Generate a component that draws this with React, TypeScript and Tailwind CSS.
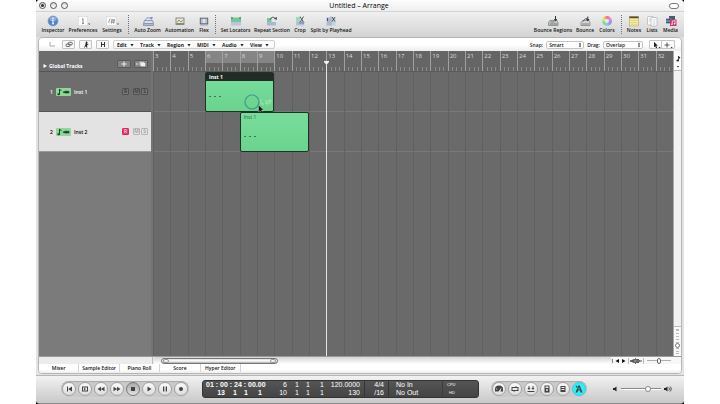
import React from 'react';
import clsx from 'clsx';

// Bars shown on the ruler, one grid column each
const bars = Array.from({ length: 30 }, (_, i) => i + 3);

interface IRegion {
  name: string;
  place: string;
  selected: boolean;
}

interface ITrack {
  id: number;
  name: string;
  armed: boolean;
  regions: IRegion[];
}

const tracks: ITrack[] = [
  { id: 1, name: 'Inst 1', armed: false, regions: [{ name: 'Inst 1', place: 'col-start-4 col-span-4', selected: true }] },
  { id: 2, name: 'Inst 2', armed: true, regions: [{ name: 'Inst 1', place: 'col-start-6 col-span-4', selected: false }] },
];

const toolIcons: Record<string, React.ReactNode> = {
  Inspector: (
    <>
      <circle cx="7" cy="6" r="5" fill="#4f86c9" stroke="#7e9fca" strokeWidth=".7" />
      <ellipse cx="7" cy="3.7" rx="3.6" ry="2.3" fill="#a9cbef" opacity=".6" />
      <path d="M7 5.3v3.4M6.1 5.4H7M6 8.8h2" stroke="#fff" strokeWidth="1.1" />
      <circle cx="7" cy="3.4" r=".8" fill="#fff" />
    </>
  ),
  Preferences: (
    <>
      <rect x="2.5" y="1.5" width="9" height="9" fill="#fbfbfb" stroke="#cfcfcf" strokeWidth=".5" />
      <path d="M7 3.5v5M6 4.2h1M6 8.4h2" stroke="#888" />
      <path d="M12.2 8.6h2l-1 1.4z" fill="#444" />
    </>
  ),
  Settings: (
    <>
      <rect x="1.5" y="1.5" width="9.5" height="9" fill="#fbfbfb" stroke="#cfcfcf" strokeWidth=".5" />
      <path d="M3.5 8l1.6-4.5M6 5.2h4M5.7 7.2h4M7.2 4L6.5 8.5M9.2 4l-.7 4.5" stroke="#777" strokeWidth=".7" />
      <path d="M12 8.6h2l-1 1.4z" fill="#444" />
    </>
  ),
  'Auto Zoom': (
    <>
      <path d="M2.5 8.5l1-3h8l1 3v2h-10z" fill="#d8dde8" stroke="#7d8699" strokeWidth=".8" />
      <path d="M4 5.5c1-3 4-3.5 6-1.5" stroke="#7c91c9" fill="none" />
      <path d="M9 2l3 .3-1.4 2.5z" fill="#6c84c4" />
      <path d="M3 8.8h9" stroke="#8799c0" strokeWidth="1.4" />
    </>
  ),
  Automation: (
    <>
      <rect x="3" y="3" width="8" height="6.5" fill="#e7e6d8" stroke="#77776f" strokeWidth=".8" />
      <path d="M4 7.5l2-2.5 2 2 2.5-2" stroke="#8a7d3e" strokeWidth=".8" fill="none" />
      <path d="M3.4 8.7h7.4" stroke="#667b62" />
    </>
  ),
  Flex: (
    <>
      <rect x="3.3" y="3.2" width="7.4" height="5.6" fill="#dfe3ee" stroke="#5d6069" strokeWidth="1" />
      <path d="M3 10h8M5 4v4M9 4v4" stroke="#828999" strokeWidth=".7" />
    </>
  ),
  'Set Locators': (
    <>
      <rect x="2" y="2.5" width="10" height="4.5" fill="#75c79a" />
      <rect x="2" y="7" width="10" height="3.5" fill="#b9c6dc" />
      <path d="M2.5 1.5v3l1.5-1.5zM11.5 1.5v3L10 3z" fill="#3d7458" />
    </>
  ),
  'Repeat Section': (
    <>
      <rect x="2" y="3" width="4.5" height="4" fill="#75c79a" />
      <rect x="2" y="7" width="9" height="3.5" fill="#aab8d2" />
      <path d="M5.5 4.5C6 1.8 9 1.5 10.5 4" stroke="#3c4858" fill="none" />
      <path d="M9 4l3 .8-.4-3z" fill="#3c4858" />
    </>
  ),
  Crop: (
    <>
      <rect x="3" y="2" width="4" height="4.5" fill="#9edab8" />
      <rect x="3" y="6.5" width="8" height="4" fill="#b3bfdd" />
      <path d="M7 1.5l3 5M10.5 1.5l-3 5" stroke="#3d4a55" strokeWidth=".9" />
      <circle cx="7.3" cy="7.5" r="1" fill="none" stroke="#4f6b87" strokeWidth=".6" />
      <circle cx="10" cy="7.5" r="1" fill="none" stroke="#4f6b87" strokeWidth=".6" />
    </>
  ),
  'Split by Playhead': (
    <>
      <rect x="2.5" y="2.5" width="4" height="8" fill="#aeb8d6" />
      <rect x="7.5" y="2.5" width="4" height="8" fill="#bfd0df" />
      <path d="M7 1v10" stroke="#888" strokeWidth=".6" />
      <path d="M8 2l3 4.5M11 2L8 6.5M3.5 3v3" stroke="#3d4a55" strokeWidth=".9" />
    </>
  ),
  'Bounce Regions': (
    <>
      <path d="M2.5 10.5v-3l1.5-2h7l1 2v3z" fill="#c9ccca" stroke="#777" strokeWidth=".7" />
      <path d="M3.5 9h8M4.5 7h4" stroke="#73827b" />
      <path d="M9.5 1v4" stroke="#333" />
      <path d="M7.8 4h3.4L9.5 6.5z" fill="#333" />
    </>
  ),
  Bounce: (
    <>
      <path d="M3 10.5v-3l1.5-2h6.5l1 2v3z" fill="#d3d5d6" stroke="#777" strokeWidth=".7" />
      <path d="M4 9h7" stroke="#7c8288" />
      <path d="M5 6.5c1-2 2-2.8 4-3" stroke="#555" fill="none" />
      <path d="M9.8 1.5v4" stroke="#333" />
      <path d="M8 4h3.6L9.8 6.3z" fill="#333" />
    </>
  ),
  Notes: (
    <>
      <rect x="2.5" y="1.5" width="9" height="9.5" fill="#f6ee9d" stroke="#9c9768" strokeWidth=".5" />
      <path d="M2.5 1.5h9v1.8h-9z" fill="#54492f" />
      <path d="M3.5 5.5h7M3.5 7.5h7M3.5 9.3h7" stroke="#d4c66c" strokeWidth=".6" />
    </>
  ),
  Lists: (
    <>
      <rect x="2.5" y="1.5" width="6" height="8.5" rx="1" fill="#fafafa" stroke="#aaa" strokeWidth=".6" />
      <rect x="6" y="2.5" width="6" height="8.5" rx="1" fill="#fff" stroke="#a5a5a5" strokeWidth=".6" />
      <path d="M7.5 5h3M7.5 7h3M7.5 9h3M4 4h1.5M4 6h1.5" stroke="#a9b5ae" strokeWidth=".6" />
    </>
  ),
  Media: (
    <>
      <rect x="5" y="1" width="6" height="5" fill="#4c5c70" />
      <rect x="2" y="3.5" width="6" height="5" fill="#6a86aa" />
      <path d="M2 4.5h5M2 7.5h5" stroke="#35475e" strokeWidth=".7" />
      <rect x="6" y="4.5" width="6.5" height="6.5" fill="#c6396c" />
      <path d="M8.3 9V6l2.7-.5v3" stroke="#fff" strokeWidth=".7" fill="none" />
      <circle cx="7.9" cy="9.2" r=".8" fill="#fff" />
      <circle cx="10.6" cy="8.7" r=".8" fill="#fff" />
    </>
  ),
};

interface ITool {
  label: string;
  width: string;
}

const leftTools: ITool[][] = [
  [
    { label: 'Inspector', width: 'w-7' },
    { label: 'Preferences', width: 'w-8' },
    { label: 'Settings', width: 'w-[26px]' },
  ],
  [
    { label: 'Auto Zoom', width: 'w-[31px]' },
    { label: 'Automation', width: 'w-[33px]' },
    { label: 'Flex', width: 'w-4' },
  ],
  [
    { label: 'Set Locators', width: 'w-[33px]' },
    { label: 'Repeat Section', width: 'w-10' },
    { label: 'Crop', width: 'w-4' },
    { label: 'Split by Playhead', width: 'w-[46px]' },
  ],
];

const rightTools: ITool[][] = [
  [
    { label: 'Bounce Regions', width: 'w-[42px]' },
    { label: 'Bounce', width: 'w-[22px]' },
    { label: 'Colors', width: 'w-[22px]' },
  ],
  [
    { label: 'Notes', width: 'w-[18px]' },
    { label: 'Lists', width: 'w-[18px]' },
    { label: 'Media', width: 'w-[19px]' },
  ],
];

const ToolGroups = ({ groups }: { groups: ITool[][] }) => (
  <div className="flex">
    {groups.map((group, index) => (
      <div key={group[0].label} className="flex">
        {index > 0 && (
          <div className="flex w-[7px] justify-center">
            <div className="border-l border-dotted border-gray-500" />
          </div>
        )}
        {group.map((tool) => (
          <button key={tool.label} className={clsx('flex flex-col items-center whitespace-nowrap', tool.width)}>
            {tool.label === 'Colors' ? (
              <span className="m-px flex size-[10px] items-center justify-center rounded-full bg-[conic-gradient(#ee7777,#e58be5,#8f8ff0,#79d4e6,#7ddc8a,#eee873,#ee7777)]">
                <span className="size-1 rounded-full bg-white/70" />
              </span>
            ) : (
              <svg viewBox="0 0 14 12" fill="none" className="h-3 w-[14px] shrink-0">{toolIcons[tool.label]}</svg>
            )}
            <span className="leading-[7px]">{tool.label}</span>
          </button>
        ))}
      </div>
    ))}
  </div>
);

const TitleBar = () => (
  <div className="flex h-[11px] items-center bg-gradient-to-b from-[#fdfdfd] to-[#efefef] pr-[5px] pl-[3px]">
    <div className="flex flex-1 gap-1">
      {['Close', 'Minimize', 'Zoom'].map((name) => (
        <button
          key={name}
          aria-label={name}
          className="flex size-[7px] items-center justify-center rounded-full border border-[#555] bg-gradient-to-b from-gray-300 to-white"
        >
          {name === 'Close' && <span className="size-[3px] rounded-full bg-[#333]" />}
        </button>
      ))}
    </div>
    <h1 className="text-[7px] leading-[10px] font-medium text-black">Untitled – Arrange</h1>
    <div className="flex flex-1 justify-end">
      <button aria-label="Toggle toolbar" className="h-[6px] w-[10px] rounded-full border border-[#777] bg-white" />
    </div>
  </div>
);

const menus = [
  { label: 'Edit', width: 'w-[23px]' },
  { label: 'Track', width: 'w-[27px]' },
  { label: 'Region', width: 'w-[30px]' },
  { label: 'MIDI', width: 'w-[25px]' },
  { label: 'Audio', width: 'w-7' },
  { label: 'View', width: 'w-[25px]' },
];

const Dropdown = ({ label, value, width }: { label: string; value: string; width: string }) => (
  <label className="flex items-center gap-[3px]">
    {label}
    <span className={clsx('relative flex', width)}>
      <select
        defaultValue={value}
        className="h-2 w-full appearance-none rounded-[2px] border border-[#c4c4c4] bg-white pl-[2px] leading-[6px]"
      >
        <option>{value}</option>
      </select>
      <svg viewBox="0 0 4 7" className="pointer-events-none absolute right-[2px] h-2 w-1">
        <path d="M2 1l1.2 2H.8zM2 6L.8 4h2.4z" fill="#333" />
      </svg>
    </span>
  </label>
);

const MenuBar = () => (
  <div className="flex h-3 items-center justify-between rounded-t-[3px] bg-gradient-to-b from-white from-50% to-[#ececec] pr-[6px] pb-px pl-[7px] font-bold text-[#222]">
    <div className="flex items-center gap-1">
      <button aria-label="Up" className="flex w-3 justify-center">
        <svg viewBox="0 0 8 7" className="h-[7px] w-2" fill="none" stroke="#aaa"><path d="M2 1v4h5" /></svg>
      </button>
      <button aria-label="Link" className="flex w-[13px] justify-center rounded-[1px] border border-[#c4c4c4] bg-[#f7f7f7]">
        <svg viewBox="0 0 8 7" className="h-[7px] w-2" fill="none" stroke="#444" strokeWidth=".8">
          <rect x="1" y="3" width="4" height="2.5" rx="1" />
          <rect x="3.3" y="1.3" width="4" height="2.5" rx="1" />
        </svg>
      </button>
      <button aria-label="Catch" className="flex w-[13px] justify-center rounded-[1px] border border-[#c4c4c4] bg-[#f7f7f7]">
        <svg viewBox="0 0 8 7" className="h-[7px] w-2" fill="#222">
          <circle cx="4.6" cy="1.3" r=".9" />
          <path d="M3.7 2h1.6v1.3h1v.8H5l.4 2.5h-1l-.6-1.6-1 1.6H2l1.3-2.7z" />
        </svg>
      </button>
      <button aria-label="Snap to grid" className="flex w-[13px] justify-center rounded-[1px] border border-[#c4c4c4] bg-[#f7f7f7]">
        <svg viewBox="0 0 8 7" className="h-[7px] w-2" fill="none" stroke="#333"><path d="M2.5 1v5M5.5 1v5M2.5 3.5h3" /></svg>
      </button>
      <div className="flex h-[9px] items-center rounded-[2px] border border-[#cfcfcf] pl-[2px]">
        {menus.map((menu) => (
          <button key={menu.label} className={clsx('flex items-center justify-between pr-[5px] pl-px', menu.width)}>
            {menu.label}
            <svg viewBox="0 0 4 4" className="size-1"><path d="M.4 1h3.2L2 3.6z" fill="#222" /></svg>
          </button>
        ))}
      </div>
    </div>
    <div className="flex items-center gap-[3px] font-semibold">
      <Dropdown label="Snap:" value="Smart" width="w-[38px]" />
      <Dropdown label="Drag:" value="Overlap" width="w-10" />
      <div className="ml-[3px] flex h-[9px] items-center rounded-[1px] border border-[#c4c4c4]">
        <button aria-label="Pointer tool" className="flex w-3 justify-center border-r border-[#c4c4c4]">
          <svg viewBox="0 0 10 8" className="h-2 w-[10px]" fill="#222">
            <path d="M3 .8v5.4l1.3-1 .8 2 1-.4-.9-2h1.6z" />
            <path d="M7.6 6h2l-1 1.3z" />
          </svg>
        </button>
        <button aria-label="Pencil tool" className="flex w-3 justify-center">
          <svg viewBox="0 0 10 8" className="h-2 w-[10px]" fill="#222">
            <path d="M4 1.5v5M1.5 4h5" stroke="#333" strokeWidth=".8" />
            <path d="M7.6 6h2l-1 1.3z" />
          </svg>
        </button>
      </div>
    </div>
  </div>
);

const TrackHeader = ({ track }: { track: ITrack }) => (
  <div
    className={clsx(
      'flex h-10 items-center border-b pr-[3px] pl-[11px] font-semibold',
      track.armed ? 'border-[#999] bg-[#e3e3e3] text-black' : 'border-[#555] bg-[#6d6d6d] text-white',
    )}
  >
    <span className="w-[6px]">{track.id}</span>
    <svg viewBox="0 0 15 8" className="h-2 w-[15px]">
      <rect width="15" height="8" rx="1" fill="#8ed79a" />
      <path d="M3.5 1v5M3.5 1l2 2" stroke="#24402a" fill="none" />
      <ellipse cx="2.7" cy="6.2" rx="1.4" ry="1" fill="#24402a" />
      <path d="M6 4h1l1-1 1 .5 1-1.2 1 1.2 1-1 1 1 1 .5-1 .7-1 1-1-1-1 1.2-1-1.2-1 .5-1-1z" fill="#24402a" />
    </svg>
    <span className="ml-[3px] flex-1">{track.name}</span>
    <div className="flex gap-px font-normal">
      {['R', 'M', 'S'].map((letter) => (
        <button
          key={letter}
          className={clsx(
            'flex size-[7px] items-center justify-center rounded-[1px] border leading-[5px]',
            letter === 'R' && 'mr-[3px]',
            letter === 'R' && track.armed && 'border-[#d92a60] bg-[#f0336d] text-white',
            !(letter === 'R' && track.armed) && (track.armed ? 'border-[#b5b5b5] text-[#888]' : 'border-[#505050] bg-[#777] text-[#222]'),
          )}
        >
          {letter}
        </button>
      ))}
    </div>
  </div>
);

const Region = ({ region }: { region: IRegion }) => (
  <div className={clsx('relative row-start-1 flex flex-col rounded-[2px] border border-[#1d3326] bg-gradient-to-b from-[#78dd9c] to-[#69d48e]', region.place)}>
    <div className={clsx('px-[3px] leading-[8px]', region.selected ? 'bg-[#232b27] font-bold text-white' : 'font-medium text-[#27613e]')}>
      {region.name}
    </div>
    <div className="flex flex-1 items-center gap-[3px] px-[3px]">
      <span className="h-px w-[2px] bg-[#3a7a53]" />
      <span className="h-px w-[2px] bg-[#3a7a53]" />
      <span className="h-px w-[2px] bg-[#3a7a53]" />
    </div>
    {/* Loop handle, click ring and the pointer */}
    {region.selected && (
      <svg viewBox="0 0 30 20" className="absolute top-5 right-0 h-5 w-[30px]" fill="none">
        <path d="M18 6v5h3M23 7v4h2V7M27 6v5M26 8h3" stroke="#b8eac8" strokeWidth=".7" />
        <circle cx="9" cy="9" r="7" stroke="#3a9a88" strokeWidth="1.2" />
        <path d="M15.5 12v7l1.6-1.4 1 2.2 1.3-.6-1-2.1h2.2z" fill="#000" stroke="#ddd" strokeWidth=".4" />
      </svg>
    )}
  </div>
);

const Ruler = () => (
  <div className="grid h-[21px] grid-cols-[repeat(30,minmax(0,1fr))] border-b border-[#5c5c5c] bg-[#656565]">
    {bars.map((bar) => (
      <div key={bar} className="flex flex-col justify-between border-l border-[#a0a0a0]">
        <div className={clsx('h-3 pl-px text-[6px] leading-[10px] text-[#dadada]', bar >= 6 && bar < 10 && 'bg-[#858585]')}>{bar}</div>
        <div className="flex h-1 justify-evenly">
          <span className="w-px bg-[#8c8c8c]" />
          <span className="w-px bg-[#8c8c8c]" />
          <span className="w-px bg-[#8c8c8c]" />
        </div>
      </div>
    ))}
  </div>
);

const Timeline = () => (
  <div className="relative flex min-w-0 flex-1 flex-col bg-[#6a6a6a]">
    <Ruler />
    <div className="relative flex-1">
      <div className="absolute inset-0 grid grid-cols-[repeat(30,minmax(0,1fr))]">
        {bars.map((bar) => <div key={bar} className="border-l border-[#616161]" />)}
      </div>
      {tracks.map((track) => (
        <div key={track.id} className="grid h-10 grid-cols-[repeat(30,minmax(0,1fr))] bg-[linear-gradient(#797979,#797979)] bg-[length:100%_1px] bg-bottom bg-no-repeat">
          {track.regions.map((region) => <Region key={region.name} region={region} />)}
        </div>
      ))}
    </div>
    {/* Playhead at bar 13 */}
    <div className="absolute top-[10px] bottom-0 left-1/3 -ml-[2px] flex w-[5px] flex-col items-center">
      <svg viewBox="0 0 5 4" className="h-1 w-[5px]"><path d="M0 0h5v1L2.5 4 0 1z" fill="#f2f2f2" /></svg>
      <div className="w-px flex-1 bg-[#e4e4e4]" />
    </div>
  </div>
);

const ArrangeArea = () => (
  <div className="flex flex-1">
    <div className="flex w-28 flex-col bg-[#7b7b7b]">
      <div className="flex h-[21px] items-end justify-between border-b border-[#555] bg-[#6d6d6d] pr-[3px] pb-[2px] pl-1">
        <button className="flex items-center gap-[2px] font-bold text-white">
          <svg viewBox="0 0 4 4" className="size-1"><path d="M.5 0v4L4 2z" fill="#fff" /></svg>
          Global Tracks
        </button>
        <div className="flex gap-[3px] pb-px">
          <button aria-label="Add track" className="flex w-[14px] justify-center rounded-[1px] border border-[#5a5a5a] bg-[#858585]">
            <svg viewBox="0 0 8 6" className="h-[6px] w-2"><path d="M4 .5v5M1.5 3h5" stroke="#eee" /></svg>
          </button>
          <button aria-label="Duplicate track" className="flex w-[14px] justify-center rounded-[1px] border border-[#5a5a5a] bg-[#858585]">
            <svg viewBox="0 0 10 6" className="h-[6px] w-[10px]">
              <path d="M0 3h2" stroke="#eee" />
              <rect x="3.5" y=".7" width="4.5" height="3.5" fill="#ccc" />
              <rect x="4.7" y="1.8" width="4.5" height="3.5" fill="#eee" />
            </svg>
          </button>
        </div>
      </div>
      {tracks.map((track) => <TrackHeader key={track.id} track={track} />)}
    </div>
    <div className="w-[2px] bg-[#747474]" />
    <Timeline />
    <div className="flex w-2 flex-col justify-between border-l border-[#aaa] bg-[#f1f1f1]">
      <button aria-label="Note display" className="flex h-5 flex-col items-center border-b border-[#bbb] bg-white pt-1">
        <svg viewBox="0 0 6 14" className="h-[14px] w-[6px]" fill="#222">
          <path d="M3.5 1v4.5" stroke="#222" strokeWidth=".8" />
          <path d="M3.5 1l1.8 1.5-.5 1.3-1.3-1z" />
          <ellipse cx="2.7" cy="5.5" rx="1.3" ry="1" />
          <path d="M1.8 11h2.4L3 12.6z" />
        </svg>
      </button>
      <div className="relative flex h-[30px] justify-center border-t border-[#bbb] bg-[#f8f8f8] py-[2px]">
        <div className="w-[3px] border-y border-[#bbb] bg-[repeating-linear-gradient(#bbb_0_1px,#f8f8f8_1px_3px)]" />
        <input aria-label="Vertical zoom" type="range" className="absolute inset-0 h-full w-full opacity-0 [writing-mode:vertical-lr]" />
        <span className="pointer-events-none absolute top-4 size-[5px] rounded-full border border-[#777] bg-white" />
      </div>
    </div>
  </div>
);

const ScrollRow = () => (
  <div className="flex h-2 border-t border-[#999] bg-[#ececec]">
    <div className="w-[114px] border-r border-[#bbb]" />
    <div className="flex flex-1 items-center rounded-full bg-gradient-to-b from-[#d5d5d5] to-white pl-2">
      <div className="flex h-[6px] w-[26%] items-center justify-between rounded-full border border-[#777] bg-gradient-to-b from-[#ddd] via-white to-[#aaa] px-px">
        <span className="h-1 w-[6px] rounded-full border border-[#999]" />
        <span className="h-1 w-[6px] rounded-full border border-[#999]" />
      </div>
    </div>
    <div className="flex items-center bg-[#f7f7f7]">
      <button aria-label="Scroll left" className="flex w-2 justify-center border-l border-[#888]">
        <svg viewBox="0 0 4 4" className="size-1"><path d="M4 0v4L.5 2z" fill="#111" /></svg>
      </button>
      <button aria-label="Scroll right" className="flex w-2 justify-center">
        <svg viewBox="0 0 4 4" className="size-1"><path d="M0 0v4l3.5-2z" fill="#111" /></svg>
      </button>
      <button aria-label="Waveform zoom" className="flex w-4 justify-center border-x border-[#bbb]">
        <svg viewBox="0 0 12 6" className="h-[6px] w-3"><path d="M0 3h2l1-1.5L4 2.4 5.5.5 7 2.4 8 1l1.5 2H12M0 3h2l1 1.5L4 3.6 5.5 5.5 7 3.6 8 5l1.5-2" fill="#888" stroke="#222" strokeWidth=".8" /></svg>
      </button>
      <div className="relative flex w-[30px] items-center justify-center">
        <div className="h-px w-6 bg-[#b0b0b0]" />
        <input aria-label="Horizontal zoom" type="range" className="absolute inset-0 h-full w-full opacity-0" />
        <span className="pointer-events-none absolute h-[6px] w-1 rounded-full border border-[#666] bg-white" />
      </div>
      <div className="w-[7px] border-l border-[#ccc]" />
    </div>
  </div>
);

const editors = ['Mixer', 'Sample Editor', 'Piano Roll', 'Score', 'Hyper Editor'];

const EditorTabs = () => (
  <div className="flex h-[9px] rounded-b-[3px] bg-gradient-to-b from-white from-60% to-[#eee] pb-px">
    <div className="grid w-[202px] grid-cols-5">
      {editors.map((editor) => (
        <button key={editor} className="border-r border-[#d5d5d5] font-semibold whitespace-nowrap">{editor}</button>
      ))}
    </div>
  </div>
);

const transport = [
  { name: 'Go to beginning', shape: 'M3 2.5v5h1v-5zM8 2.5v5L4.2 5z' },
  { name: 'Play from selection', shape: 'M2 2.5h6v5H2zM3 3.4v3.2h4V3.4zM4 3.8v2.4L6 5z' },
  { name: 'Rewind', shape: 'M5 2.7v4.6L1.5 5zM8.5 2.7v4.6L5 5z' },
  { name: 'Forward', shape: 'M1.5 2.7v4.6L5 5zM5 2.7v4.6L8.5 5z' },
  { name: 'Stop', shape: 'M3 3h4v4H3z' },
  { name: 'Play', shape: 'M3.5 2.5v5L7.5 5z' },
  { name: 'Pause', shape: 'M3 2.5h1.3v5H3zM5.7 2.5H7v5H5.7z' },
  { name: 'Record', shape: 'M5 3a2 2 0 100 4 2 2 0 000-4z' },
];

const modes = [
  { name: 'Low latency', shape: 'M1 7.5V5a4 3.5 0 018 0v2.5H6.5L7.5 3.5 4.5 7.5zM2.2 4.6h1v1h-1z' },
  { name: 'Cycle', shape: 'M1.5 3h4V2l1.5 1h1.5v4h-4v1L3 7H1.5zM2.5 4v2h5V4z' },
  { name: 'Autopunch', shape: 'M1.5 7h7v1h-7zM2.5 2h1v2h1L3 6 1.5 4h1zM6.5 2h1v2h1L7 6 5.5 4h1z' },
  { name: 'Replace', shape: 'M2.5 1.5h5v7h-5zM3.5 2.5V4h3V2.5zM5 5a1 1 0 100 2 1 1 0 000-2z' },
  { name: 'Solo', shape: 'M2.5 2h5v6h-5zM3.5 3v1h3V3zM3.5 5v1h3V5z' },
  { name: 'Metronome', shape: 'M4.2 1.5h1.6l2.7 7h-2L6 6.5H4l-.5 2h-2zM4.8 3.5l-.5 2h1.4l-.5-2zM1.5 2l1-.5L4 4l-.8.5z' },
];

const RoundButton = ({ name, shape, tone }: { name: string; shape: string; tone: string }) => (
  <button aria-label={name} className={clsx('flex size-[14px] items-center justify-center rounded-full border', tone)}>
    <svg viewBox="0 0 10 10" className="size-[10px]"><path d={shape} fill="#444" fillRule="evenodd" /></svg>
  </button>
);

const plainTone = 'border-[#a2a2a2] bg-gradient-to-b from-[#fafafa] to-[#dcdcdc]';

const counters = [
  { values: ['6', '10'], width: 'w-[21px]' },
  { values: ['1', '1'], width: 'w-3' },
  { values: ['1', '1'], width: 'w-[11px]' },
  { values: ['1', '1'], width: 'w-[14px]' },
  { values: ['120.0000', '130'], width: 'w-9 mr-1' },
  { values: ['4/4', '/16'], width: 'w-5 border-l border-[#333] mr-1' },
];

const Display = () => (
  <div className="flex h-[18px] w-[277px] items-center rounded-[3px] border border-[#333] bg-gradient-to-b from-[#555] to-[#444] pl-[3px] text-[7px] leading-[8px] text-white [font-family:'Liberation_Sans',sans-serif]">
    <div className="w-[60px] font-bold">
      <div className="whitespace-nowrap">01 : 00 : 24 : 00.00</div>
      <div className="grid w-[56px] grid-cols-[19px_12px_11px_14px] text-right">
        <span>13</span>
        <span>1</span>
        <span>1</span>
        <span>1</span>
      </div>
    </div>
    {counters.map((counter, index) => (
      <div key={index} className={clsx('text-right', counter.width)}>
        {counter.values.map((value, row) => <div key={row}>{value}</div>)}
      </div>
    ))}
    <div className="flex-1 border-l border-[#333] pl-[7px]">
      <div>No In</div>
      <div>No Out</div>
    </div>
    <div className="w-9 border-l border-[#3d3d3d] pl-1 text-[4px]">
      <div>CPU</div>
      <div className="pl-[2px]">HD</div>
    </div>
  </div>
);

const TransportBar = () => (
  <div className="flex h-7 items-center border-t border-[#b5b5b5] bg-gradient-to-b from-[#f2f2f2] to-[#c9c9c9] pb-[2px] pl-[25px]">
    <div className="flex gap-[2px] rounded-full bg-[#cacaca] p-px shadow-[inset_0_1px_1px_#aaa]">
      {transport.map((item) => (
        <RoundButton
          key={item.name}
          name={item.name}
          shape={item.shape}
          tone={item.name === 'Stop' ? 'border-[#777] bg-gradient-to-b from-[#aaa] to-[#e2e2e2]' : plainTone}
        />
      ))}
    </div>
    <div className="ml-[13px]">
      <Display />
    </div>
    <div className="ml-3 flex gap-[2px] rounded-full bg-[#cacaca] p-px shadow-[inset_0_1px_1px_#aaa]">
      {modes.map((item) => (
        <RoundButton
          key={item.name}
          name={item.name}
          shape={item.shape}
          tone={item.name === 'Metronome' ? 'border-[#2fd0dc] bg-[#2ff0f8]' : plainTone}
        />
      ))}
    </div>
    <div className="mr-3 ml-auto flex items-center gap-[3px]">
      <svg viewBox="0 0 6 6" className="size-[6px]"><path d="M1 2h1.5l2-1.5v5L2.5 4H1z" fill="#222" /></svg>
      <div className="relative flex w-10 items-center">
        <div className="h-px flex-1 bg-[#888] shadow-[0_1px_0_#fff]" />
        <input aria-label="Master volume" type="range" defaultValue={68} className="absolute h-[6px] w-full opacity-0" />
        <span className="pointer-events-none absolute left-6 size-[6px] rounded-full border border-[#888] bg-white" />
      </div>
      <svg viewBox="0 0 8 6" className="h-[6px] w-2" fill="none">
        <path d="M0 2h1.5l2-1.5v5L1.5 4H0z" fill="#222" />
        <path d="M4.7 1.5c1 1 1 2 0 3M6 .5c1.6 1.6 1.6 3.4 0 5" stroke="#222" strokeWidth=".8" />
      </svg>
    </div>
  </div>
);

const App = () => {
  return (
    <div className="flex min-h-screen flex-col bg-white px-9 text-[5px] leading-[6px] text-[#111] [font-family:'Open_Sans','Noto_Sans',sans-serif]">
      <div className="flex flex-1 flex-col bg-black">
        <div className="flex flex-1 flex-col overflow-hidden rounded-[4px] border-b border-[#888] bg-[#e2e2e2]">
          <TitleBar />
          <div className="flex justify-between border-t border-[#d2d2d2] bg-gradient-to-b from-[#f0f0f0] to-[#d3d3d3] pt-[3px] pr-1 pb-[3px] pl-[3px] font-semibold">
            <ToolGroups groups={leftTools} />
            <ToolGroups groups={rightTools} />
          </div>
          <div className="mx-[2px] mb-px flex flex-1 flex-col rounded-[4px] border border-[#b5b5b5] bg-white pt-px">
            <MenuBar />
            <ArrangeArea />
            <ScrollRow />
            <EditorTabs />
          </div>
          <TransportBar />
        </div>
      </div>
    </div>
  );
};

export default App;
